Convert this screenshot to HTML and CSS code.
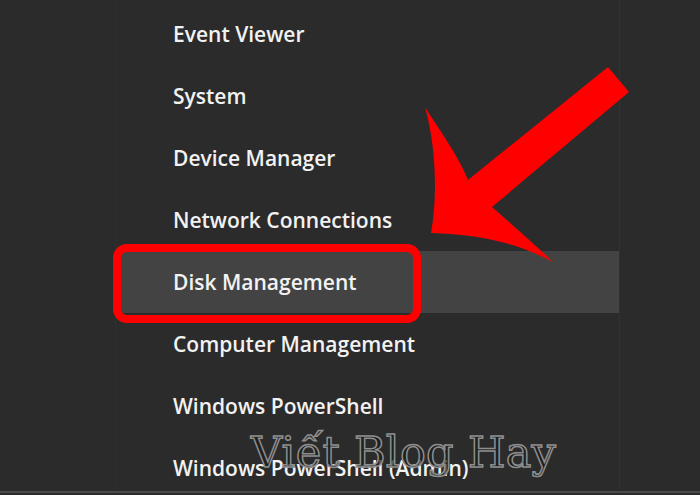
FILE: index.html
```html
<!DOCTYPE html>
<html>
<head>
<meta charset="utf-8">
<link rel="stylesheet" href="styles.css">
</head>
<body>
<div class="screen">
  <ul class="menu">
    <li class="item">Event Viewer</li>
    <li class="item">System</li>
    <li class="item">Device Manager</li>
    <li class="item">Network Connections</li>
    <li class="item item-active">Disk Management</li>
    <li class="item">Computer Management</li>
    <li class="item">Windows PowerShell</li>
    <li class="item">Windows PowerShell (Admin)</li>
  </ul>
  <div class="footer-line"></div>
  <div class="callout"></div>
  <svg class="arrow" viewBox="0 0 700 495" width="700" height="495">
    <path d="M425,107 C438,128 458,155 468,180 L608,67 L629,92 L492,207 C507,220 530,240 553,262 C517,243 483,235 431,233 C437,200 437,150 425,107 Z" fill="#ff0000"/>
  </svg>
  <div class="watermark">Viết Blog Hay</div>
</div>
</body>
</html>
```
FILE: styles.css
```css
html, body {
  margin: 0;
  padding: 0;
  background: #2b2b2b;
}
.screen {
  position: relative;
  width: 700px;
  height: 495px;
  overflow: hidden;
  background: #2b2b2b;
}
.menu {
  list-style: none;
  margin: 0 0 0 115px;
  padding: 3px 0 0 0;
  width: 505px;
  height: 489px;
  border-left: 1px solid #2f2f2f;
  border-right: 1px solid #313131;
  box-sizing: border-box;
}
.item {
  height: 62px;
  display: flex;
  align-items: center;
  padding-left: 57px;
  font-family: "Open Sans", "Noto Sans", sans-serif;
  font-size: 21px;
  font-weight: 600;
  color: #f2f2f2;
}
.item-active {
  background: #434343;
}
.footer-line {
  height: 2px;
  margin-top: 2px;
  background: #4a4a4a;
}
.callout {
  position: absolute;
  left: 113px;
  top: 244px;
  width: 308px;
  height: 79px;
  box-sizing: border-box;
  border: 8px solid #ff0000;
  border-radius: 14px;
}
.arrow {
  position: absolute;
  left: 0;
  top: 0;
}
.watermark {
  position: absolute;
  left: 251px;
  top: 427px;
  font-family: "DejaVu Serif", serif;
  font-size: 43px;
  letter-spacing: 0.3px;
  color: rgba(26, 26, 26, 0.7);
  -webkit-text-stroke: 1.5px #8e8e8e;
  white-space: nowrap;
}
```
